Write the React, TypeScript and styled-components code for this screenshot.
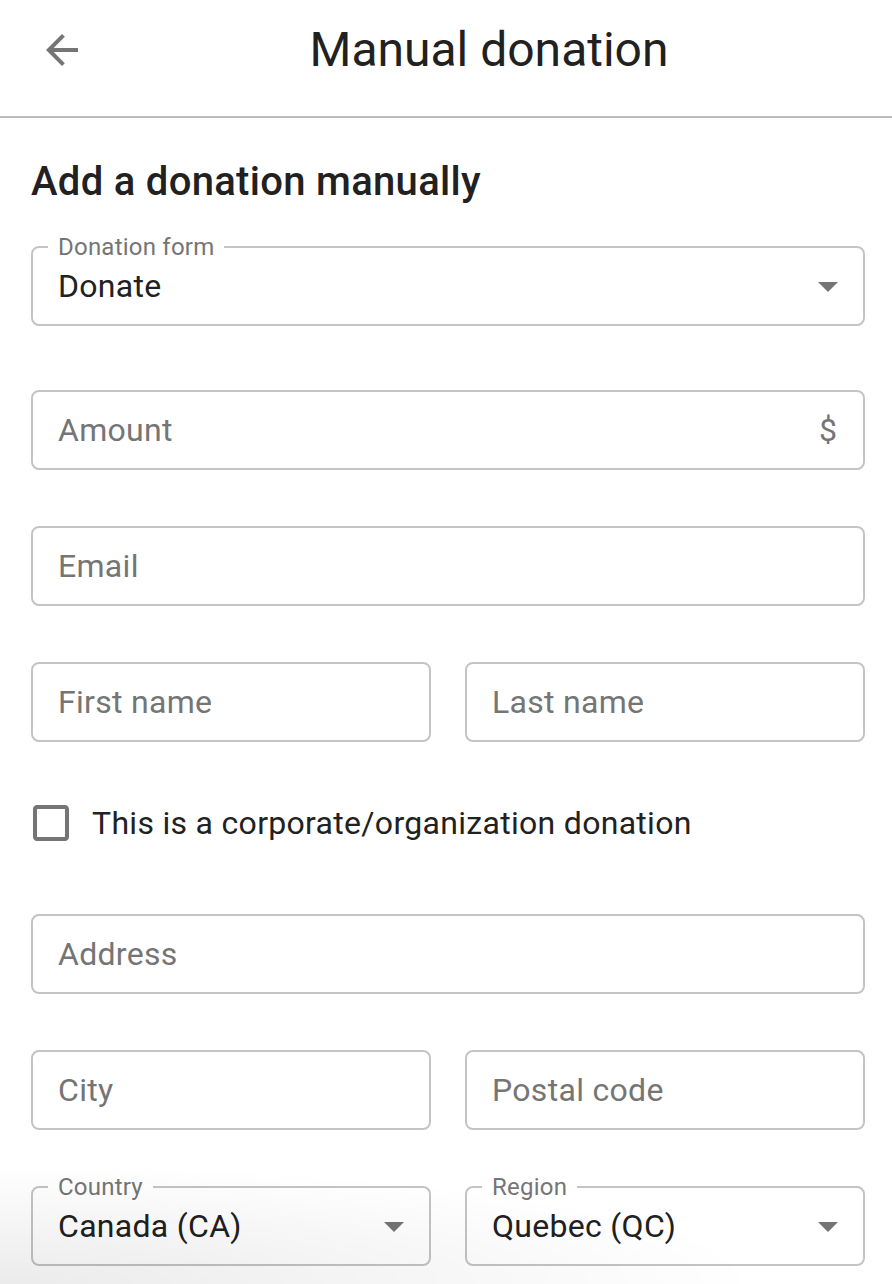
import React from "react";
import styled, { createGlobalStyle } from "styled-components";

const GlobalStyle = createGlobalStyle`
  * { box-sizing: border-box; }
  html, body { margin: 0; padding: 0; background: #ffffff; }
  body {
    font-family: Roboto, "Noto Sans", Arial, sans-serif;
    color: #212121;
    -webkit-font-smoothing: antialiased;
  }
`;

const Page = styled.div`
  width: 892px;
  min-height: 1284px;
  background: #ffffff;
  overflow: hidden;
`;

const Header = styled.header`
  display: flex;
  align-items: center;
  height: 118px;
  padding-bottom: 16px;
  border-bottom: 2px solid #bdbdbd;
`;

const BackButton = styled.button`
  display: flex;
  align-items: center;
  justify-content: center;
  width: 48px;
  height: 48px;
  margin-left: 38px;
  padding: 0;
  border: none;
  background: transparent;
  color: #757575;
  cursor: pointer;
`;

const Title = styled.h1`
  flex: 1;
  margin: 0;
  text-align: center;
  font-size: 48px;
  font-weight: 400;
  line-height: 56px;
  color: #212121;
`;

const Content = styled.main`
  padding: 40px 27px 0 31px;
`;

const Heading = styled.h2`
  margin: 0 0 40px;
  font-size: 40px;
  font-weight: 500;
  line-height: 48px;
  letter-spacing: 0.0075em;
  color: #212121;
`;

const Form = styled.form`
  display: flex;
  flex-direction: column;
  gap: 56px;
`;

const Row = styled.div`
  display: grid;
  grid-template-columns: 1fr 1fr;
  column-gap: 34px;
`;

const FieldBox = styled.div<{ $extra?: number }>`
  position: relative;
  display: flex;
  align-items: center;
  height: 80px;
  padding: 0 26px 0 25px;
  border: 2px solid #c4c4c4;
  border-radius: 8px;
  margin-bottom: ${(p) => p.$extra ?? 0}px;
`;

const FloatingLabel = styled.span`
  position: absolute;
  top: -15px;
  left: 15px;
  padding: 0 10px;
  background: #ffffff;
  font-size: 24px;
  line-height: 28px;
  letter-spacing: 0.00938em;
  color: #757575;
`;

const Value = styled.span<{ $placeholder?: boolean }>`
  flex: 1;
  font-size: 32px;
  line-height: 40px;
  letter-spacing: 0.00938em;
  color: ${(p) => (p.$placeholder ? "#757575" : "#212121")};
  white-space: nowrap;
`;

const Adornment = styled.span`
  font-size: 32px;
  line-height: 40px;
  color: #757575;
`;

const DropIcon = styled.svg`
  width: 48px;
  height: 48px;
  margin-right: -15px;
  fill: #757575;
  flex: none;
`;

const CheckRow = styled.label`
  display: flex;
  align-items: center;
  height: 50px;
  margin-bottom: 10px;
  cursor: pointer;
`;

const CheckIcon = styled.svg`
  width: 48px;
  height: 48px;
  margin-left: -4px;
  margin-right: 17px;
  fill: #757575;
  flex: none;
`;

const CheckText = styled.span`
  font-size: 32px;
  line-height: 40px;
  letter-spacing: 0.00938em;
  color: #212121;
`;

const BottomShade = styled.div`
  position: fixed;
  left: 0;
  right: 0;
  bottom: 0;
  height: 130px;
  pointer-events: none;
  background: radial-gradient(
    ellipse 760px 120px at 0% 100%,
    rgba(0, 0, 0, 0.08) 0%,
    rgba(0, 0, 0, 0.04) 50%,
    rgba(0, 0, 0, 0) 100%
  );
`;

const ArrowDrop = () => (
  <DropIcon viewBox="0 0 24 24" aria-hidden="true">
    <path d="M7 10l5 5 5-5z" />
  </DropIcon>
);

type FieldProps = {
  label?: string;
  value?: string;
  placeholder?: string;
  select?: boolean;
  adornment?: string;
  extra?: number;
};

const Field = ({ label, value, placeholder, select, adornment, extra }: FieldProps) => (
  <FieldBox $extra={extra}>
    {label && <FloatingLabel>{label}</FloatingLabel>}
    <Value $placeholder={!value}>{value ?? placeholder}</Value>
    {adornment && <Adornment>{adornment}</Adornment>}
    {select && <ArrowDrop />}
  </FieldBox>
);

export default function App() {
  return (
    <Page>
      <GlobalStyle />
      <Header>
        <BackButton aria-label="Back">
          <svg width="48" height="48" viewBox="0 0 24 24" fill="currentColor" aria-hidden="true">
            <path d="M20 11H7.83l5.59-5.59L12 4l-8 8 8 8 1.41-1.41L7.83 13H20v-2z" />
          </svg>
        </BackButton>
        <Title>Manual donation</Title>
      </Header>
      <Content>
        <Heading>Add a donation manually</Heading>
        <Form>
          <Field label="Donation form" value="Donate" select extra={8} />
          <Field placeholder="Amount" adornment="$" />
          <Field placeholder="Email" />
          <Row>
            <Field placeholder="First name" />
            <Field placeholder="Last name" />
          </Row>
          <CheckRow>
            <CheckIcon viewBox="0 0 24 24" aria-hidden="true">
              <path d="M19 5v14H5V5h14m0-2H5c-1.1 0-2 .9-2 2v14c0 1.1.9 2 2 2h14c1.1 0 2-.9 2-2V5c0-1.1-.9-2-2-2z" />
            </CheckIcon>
            <CheckText>This is a corporate/organization donation</CheckText>
          </CheckRow>
          <Field placeholder="Address" />
          <Row>
            <Field placeholder="City" />
            <Field placeholder="Postal code" />
          </Row>
          <Row>
            <Field label="Country" value="Canada (CA)" select />
            <Field label="Region" value="Quebec (QC)" select />
          </Row>
        </Form>
      </Content>
      <BottomShade />
    </Page>
  );
}
